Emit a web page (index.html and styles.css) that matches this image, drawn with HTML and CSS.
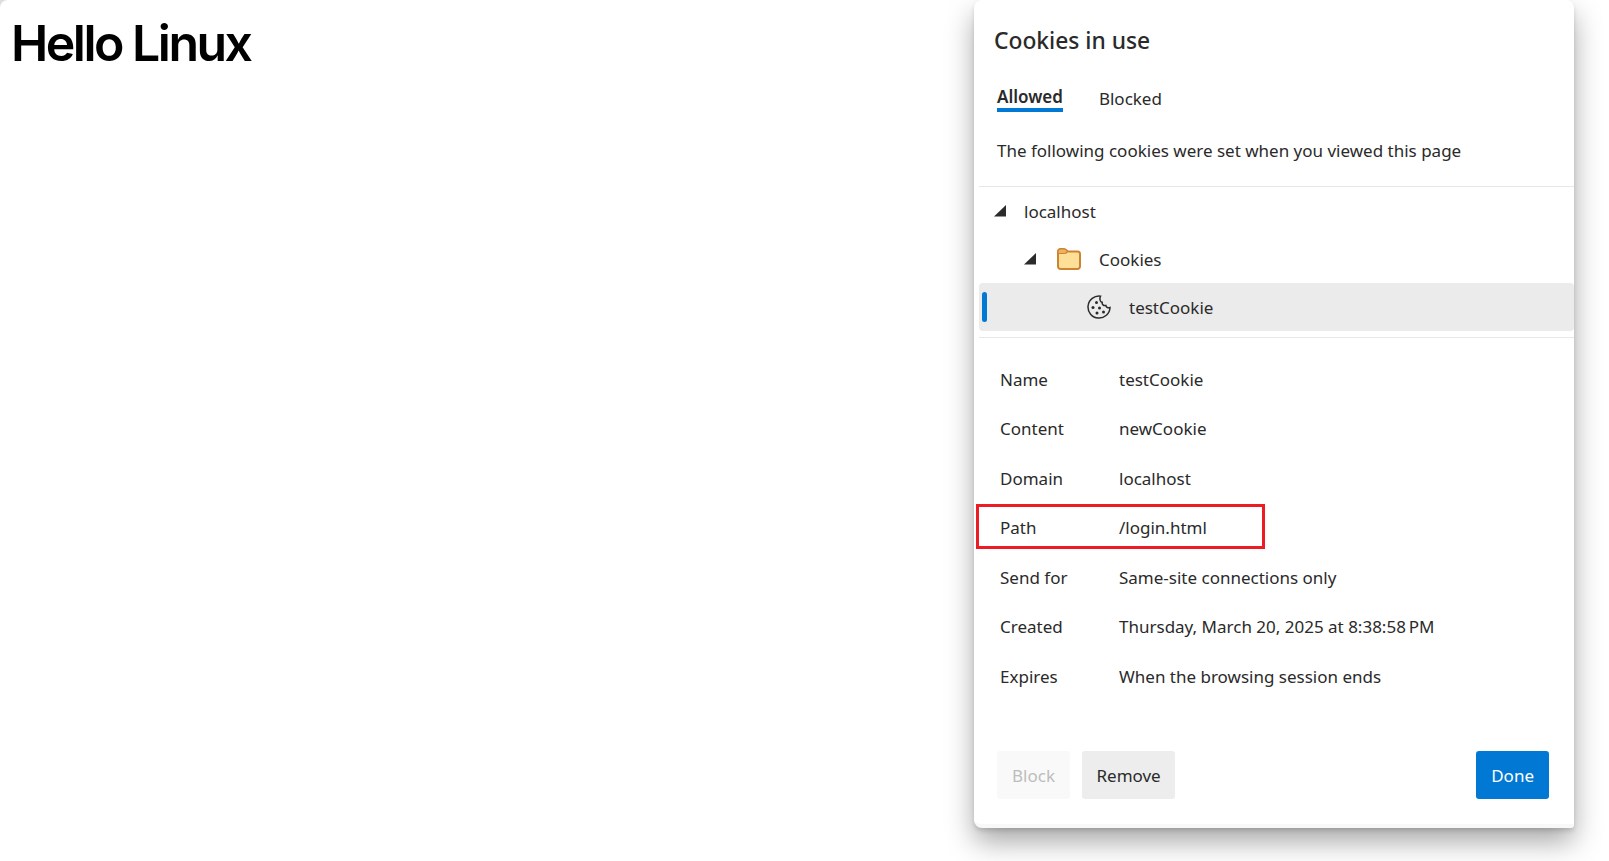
FILE: index.html
```html
<!DOCTYPE html>
<html lang="en">
<head>
<meta charset="utf-8">
<title>Hello Linux</title>
<link rel="stylesheet" href="styles.css">
</head>
<body>
<h1 class="hello">Hello Linux</h1>
<section class="panel">
  <h2 class="title">Cookies in use</h2>
  <div class="tabs">
    <span class="tab tab-active">Allowed</span>
    <span class="tab">Blocked</span>
  </div>
  <p class="desc">The following cookies were set when you viewed this page</p>
  <div class="tree">
    <div class="node">
      <svg class="twist" viewBox="0 0 12 12"><path d="M12 0V11.500H0Z"/></svg>
      <span>localhost</span>
    </div>
    <div class="node node-2">
      <svg class="twist" viewBox="0 0 12 12"><path d="M12 0V11.500H0Z"/></svg>
      <svg class="folder" viewBox="0 0 24 22">
        <path class="folder-body" d="M1 3.500A2.500 2.500 0 0 1 3.500 1H7C9 1 9.500 3.500 11.500 3.500H20.500A2.500 2.500 0 0 1 23 6V18.500A2.500 2.500 0 0 1 20.500 21H3.500A2.500 2.500 0 0 1 1 18.500Z"/>
        <path class="folder-tab" d="M1 3.500A2.500 2.500 0 0 1 3.500 1H7C9 1 9.500 2.500 10.500 3.500C10 5 8.500 5.500 7 5.500H1Z"/>
      </svg>
      <span>Cookies</span>
    </div>
    <div class="node node-3">
      <span class="sel-bar"></span>
      <svg class="cookie" viewBox="0 0 24 24">
        <path class="cookie-line" d="M13.500 1.200A11 11 0 1 0 23 12.500C21 13.200 19.300 12.500 18.800 10.500C16.500 11 14.800 9.500 15.200 7.300C13 7 12.300 3.800 13.500 1.200Z"/>
        <circle cx="9.500" cy="7.500" r="1.500"/><circle cx="6" cy="12.500" r="1.500"/><circle cx="12.500" cy="13" r="1.500"/><circle cx="10" cy="18" r="1.500"/><circle cx="16.500" cy="17" r="1.500"/>
      </svg>
      <span>testCookie</span>
    </div>
  </div>
  <dl class="details">
    <div class="row"><dt>Name</dt><dd>testCookie</dd></div>
    <div class="row"><dt>Content</dt><dd>newCookie</dd></div>
    <div class="row"><dt>Domain</dt><dd>localhost</dd></div>
    <div class="row"><dt>Path</dt><dd>/login.html</dd><span class="mark"></span></div>
    <div class="row"><dt>Send for</dt><dd>Same-site connections only</dd></div>
    <div class="row"><dt>Created</dt><dd>Thursday, March 20, 2025 at 8:38:58&#8239;PM</dd></div>
    <div class="row"><dt>Expires</dt><dd>When the browsing session ends</dd></div>
  </dl>
  <div class="actions">
    <button class="btn btn-off">Block</button>
    <button class="btn btn-mid">Remove</button>
    <button class="btn btn-main">Done</button>
  </div>
</section>
</body>
</html>
```
FILE: styles.css
```css
* { box-sizing: border-box; }
html { height: 100%; background: #dedede; }
body {
  position: relative;
  margin: 0;
  height: 100%;
  overflow: hidden;
  background: #fff;
  border-top-left-radius: 8px;
  font-family: "Noto Sans", "Open Sans", sans-serif;
  color: #2a2a2a;
}
.hello {
  margin: 0;
  padding: 17px 0 0 11px;
  font: 600 50px/52px Inter, "Liberation Sans", sans-serif;
  letter-spacing: -2.5px;
  color: #000;
}
.panel {
  position: absolute;
  left: 974px;
  top: 0;
  width: 600px;
  height: 828px;
  display: flex;
  flex-direction: column;
  background: #fff;
  border-bottom: 4px solid #f8f8f8;
  border-radius: 8px 8px 3px 8px;
  box-shadow: 0 14px 28px rgba(0,0,0,.34), 0 3px 4px rgba(0,0,0,.12);
  font-size: 17px;
}
.title {
  margin: 0;
  height: 82px;
  padding-left: 20px;
  font-size: 22.800px;
  font-weight: 500;
  line-height: 82px;
}
.tabs { display: flex; gap: 36px; height: 30px; padding-left: 23px; }
.tab { height: 30px; line-height: 34px; }
.tab-active { font-weight: 600; line-height: 30px; border-bottom: 4px solid #0078d4; }
.desc { margin: 0 0 0 5px; height: 75px; padding: 4px 0 0 18px; line-height: 70px; border-bottom: 1px solid #e8e8e8; }
.tree { border-bottom: 1px solid #e8e8e8; margin-left: 5px; padding-bottom: 6px; }
.node { position: relative; display: flex; align-items: center; height: 48px; padding-left: 15px; }
.node-2 { padding-left: 45px; }
.node-3 { padding-left: 108px; background: #ebebeb; border-radius: 4px; }
.twist { width: 12px; height: 12px; margin-right: 18px; fill: #2b2b2b; }
.folder { width: 24px; height: 22px; margin: 0 18px 0 3px; }
.folder-body { fill: #fddf97; stroke: #cd8430; stroke-width: 2; }
.folder-tab { fill: #f0b066; stroke: #cd8430; stroke-width: 1.200; }
.cookie { width: 24px; height: 24px; margin-right: 18px; fill: #2b2b2b; }
.cookie-line { fill: none; stroke: #2b2b2b; stroke-width: 1.500; }
.sel-bar { position: absolute; left: 3px; top: 9px; width: 5px; height: 30px; border-radius: 3px; background: #0078d4; }
.details { margin: 16.500px 0 0; }
.row { position: relative; display: flex; align-items: center; height: 49.500px; padding-left: 26px; }
.row dt { width: 119px; }
.row dd { margin: 0; }
.mark { position: absolute; left: 2px; top: 1px; width: 289px; height: 45px; border: 3px solid #ed1c24; }
.actions { display: flex; gap: 12px; margin-top: auto; padding: 0 25px 25px 23px; }
.btn {
  height: 48px;
  padding: 0 15px;
  border: 0;
  border-radius: 3px;
  background: #ededed;
  color: #2a2a2a;
  font: 17px "Noto Sans", "Open Sans", sans-serif;
}
.btn-mid { padding: 0 14.500px; }
.btn-off { background: #f9f9f9; color: #bdbdbd; }
.btn-main { margin-left: auto; background: #0078d4; color: #fff; }
```
